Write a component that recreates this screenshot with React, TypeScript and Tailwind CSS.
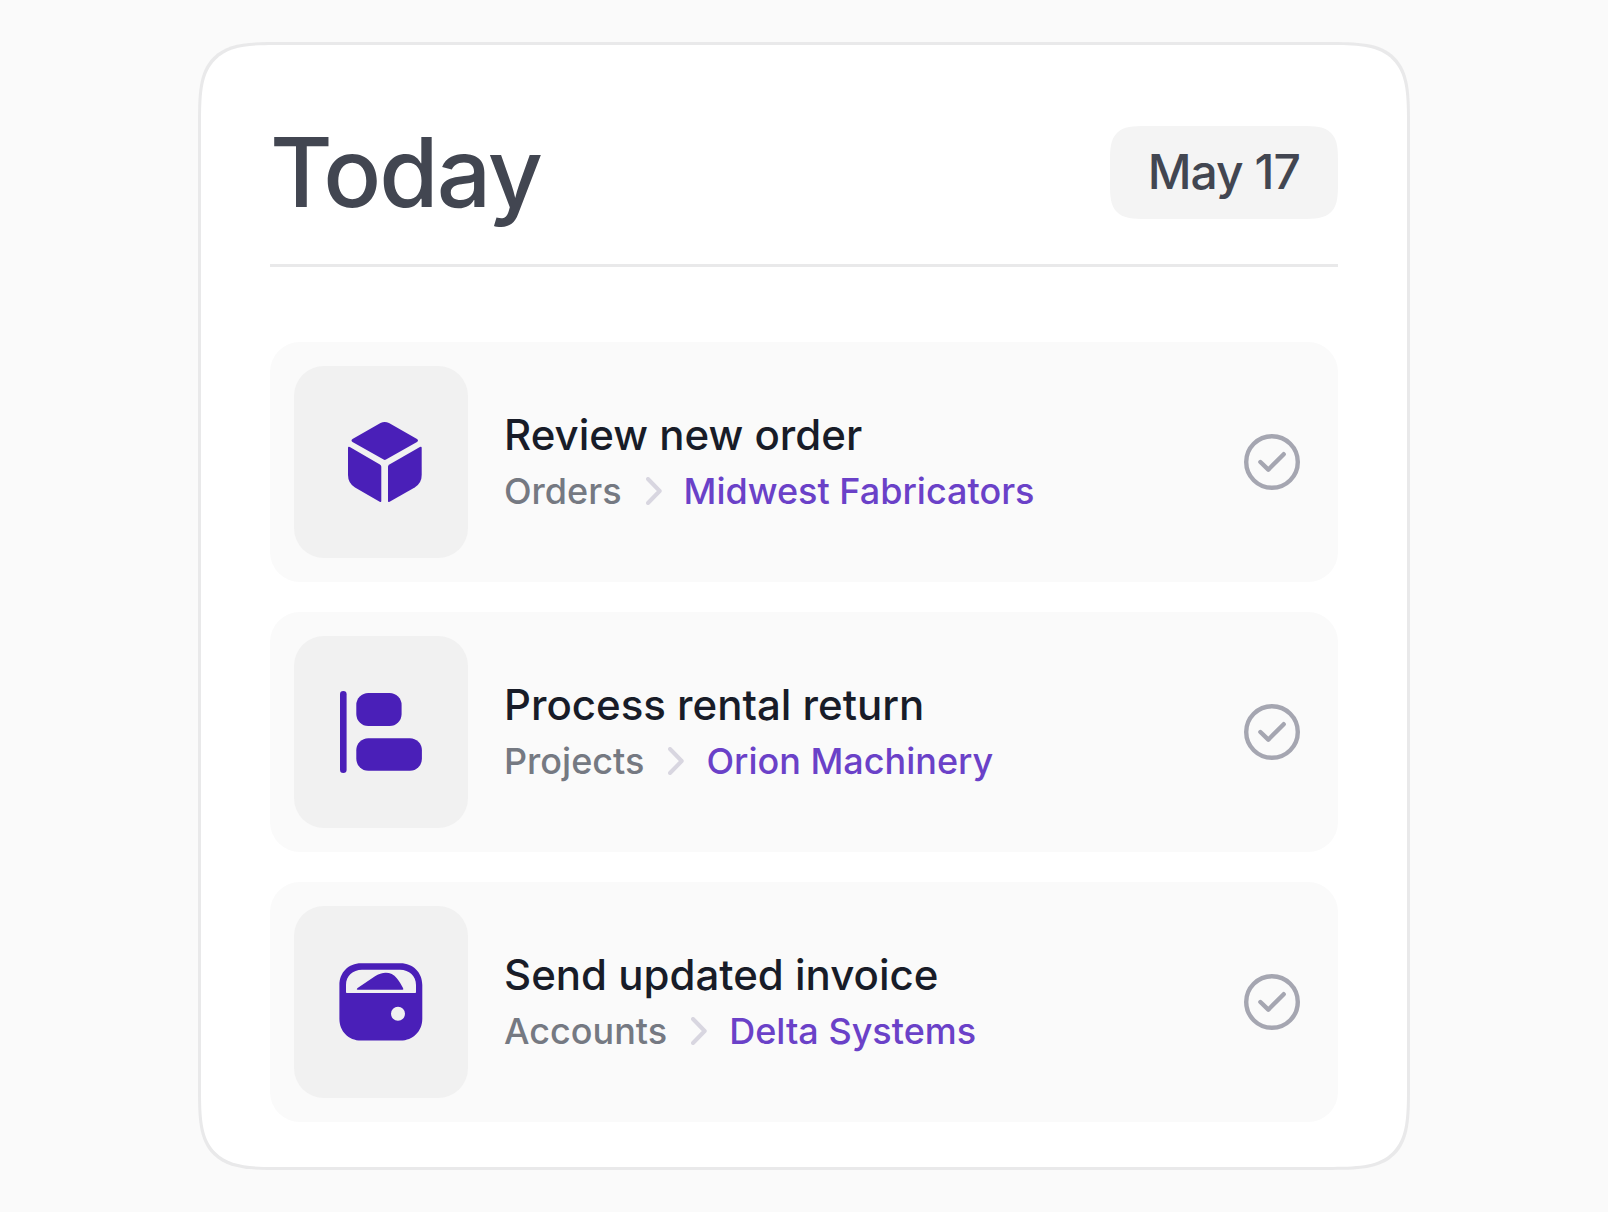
import type { ReactNode } from 'react';

type Task = {
    title: string;
    section: string;
    target: string;
    icon: ReactNode;
};

function CubeIcon() {
    return (
        <svg viewBox="0 0 96 96" className="size-24" fill="currentColor" aria-hidden="true">
            <path d="M47.5 9 Q51.7 7 56 9 L84 25 Q86 26.4 84 27.9 L53 45.6 Q51.8 46.3 50.6 45.6 L19.5 27.9 Q17.5 26.4 19.5 25 Z" />
            <path d="M15 34 Q15 32.2 16.8 33 L46.9 50.4 Q48.3 51.2 48.3 52.8 L48.3 87 Q48.3 88.6 46.7 87.7 L22 73.5 Q15 69.2 15 61 Z" />
            <path d="M88.7 34 Q88.7 32.2 86.9 33 L56.4 50.4 Q55 51.2 55 52.8 L55 87 Q55 88.6 56.6 87.7 L81.7 73.5 Q88.7 69.2 88.7 61 Z" />
        </svg>
    );
}

function BarsIcon() {
    return (
        <svg viewBox="0 0 96 96" className="size-24" fill="currentColor" aria-hidden="true">
            <rect x="7" y="7" width="6.6" height="82" rx="3.3" />
            <rect x="23.3" y="9" width="45.3" height="33" rx="12" />
            <rect x="23.3" y="54.2" width="65.6" height="32.6" rx="12" />
        </svg>
    );
}

function WalletIcon() {
    return (
        <svg viewBox="0 0 96 96" className="size-24" fill="currentColor" aria-hidden="true">
            <path
                fillRule="evenodd"
                d="M28 9.3 H67.5 C80 9.3 89.3 18.5 89.3 31 V64.7 C89.3 77.2 80 86.5 67.5 86.5 H28 C15.5 86.5 6.4 77.2 6.4 64.7 V31 C6.4 18.5 15.5 9.3 28 9.3 Z M29 15.7 C19.8 15.7 13 22 13 31 V38.2 Q13 39 13.8 39 H82.2 Q83 39 83 38.2 V31 C83 22 76.2 15.7 67 15.7 Z M65 52.8 A7 7 0 1 0 65 66.8 A7 7 0 1 0 65 52.8 Z"
            />
            <path d="M24.6 34 L42 22.3 C49.5 17.4 58.5 17.4 63.8 24.2 C66.5 27.6 68.5 31.2 70 34 Q71 35.8 69.6 35.8 H24.6 Q23 35.5 24.6 34 Z" />
        </svg>
    );
}

const tasks: Task[] = [
    { title: 'Review new order', section: 'Orders', target: 'Midwest Fabricators', icon: <CubeIcon /> },
    { title: 'Process rental return', section: 'Projects', target: 'Orion Machinery', icon: <BarsIcon /> },
    { title: 'Send updated invoice', section: 'Accounts', target: 'Delta Systems', icon: <WalletIcon /> },
];

function TaskRow({ title, section, target, icon }: Task) {
    return (
        <li className="flex items-center rounded-[30px] bg-[#fafafa] p-6 pr-9">
            <div className="flex h-48 w-[174px] shrink-0 items-center justify-center rounded-[30px] bg-[#f1f1f1] text-[#4a1fb8]">
                {icon}
            </div>
            <div className="ml-9 min-w-0 flex-1 pt-0.5">
                <h2 className="text-[42px] leading-[56px] text-[#181c28]">{title}</h2>
                <p className="flex items-center text-[36px] leading-[56px]">
                    <span className="text-[#757982]">{section}</span>
                    <svg viewBox="0 0 16 28" className="mr-[22px] ml-6 h-7 w-4 shrink-0" fill="none" stroke="#d8d6e0" strokeWidth="4" strokeLinecap="round" strokeLinejoin="round" aria-hidden="true">
                        <path d="M2 2 L13.7 14 L2 26" />
                    </svg>
                    <a href="#" className="text-[#6a41c8] hover:underline">{target}</a>
                </p>
            </div>
            <button type="button" aria-label={`Complete ${title}`} className="shrink-0 text-[#a5a6b1] hover:text-[#4a1fb8]">
                <svg viewBox="0 0 60 60" className="size-[60px]" fill="none" stroke="currentColor" strokeWidth="4.4" strokeLinecap="round" strokeLinejoin="round" aria-hidden="true">
                    <circle cx="30" cy="30" r="25.8" />
                    <path d="M18.4 30 L26.3 37.7 L41.7 22.2" />
                </svg>
            </button>
        </li>
    );
}

export default function App() {
    return (
        <main className="min-h-screen bg-[#fafafa] py-[42px] font-['Inter',sans-serif] font-medium">
            <section className="mx-auto max-w-[1212px] rounded-[84px] border-3 border-[#e9e9ea] bg-white px-[69px] pt-[81px] pb-[45px] [corner-shape:superellipse(1.8)]">
                <header className="flex items-center justify-between border-b-3 border-[#e9e9ea] pb-[45px]">
                    <h1 className="text-[96px] leading-[93px] tracking-[-0.02em] text-[#424651]">Today</h1>
                    <time className="rounded-[36px] bg-[#f4f4f4] px-[38px] pb-0.5 text-[48px] leading-[91px] tracking-[-0.02em] text-[#424651] [corner-shape:superellipse(1.7)]">
                        May 17
                    </time>
                </header>
                <ul className="mt-[75px] flex flex-col gap-[30px]">
                    {tasks.map((task) => (
                        <TaskRow key={task.title} {...task} />
                    ))}
                </ul>
            </section>
        </main>
    );
}
